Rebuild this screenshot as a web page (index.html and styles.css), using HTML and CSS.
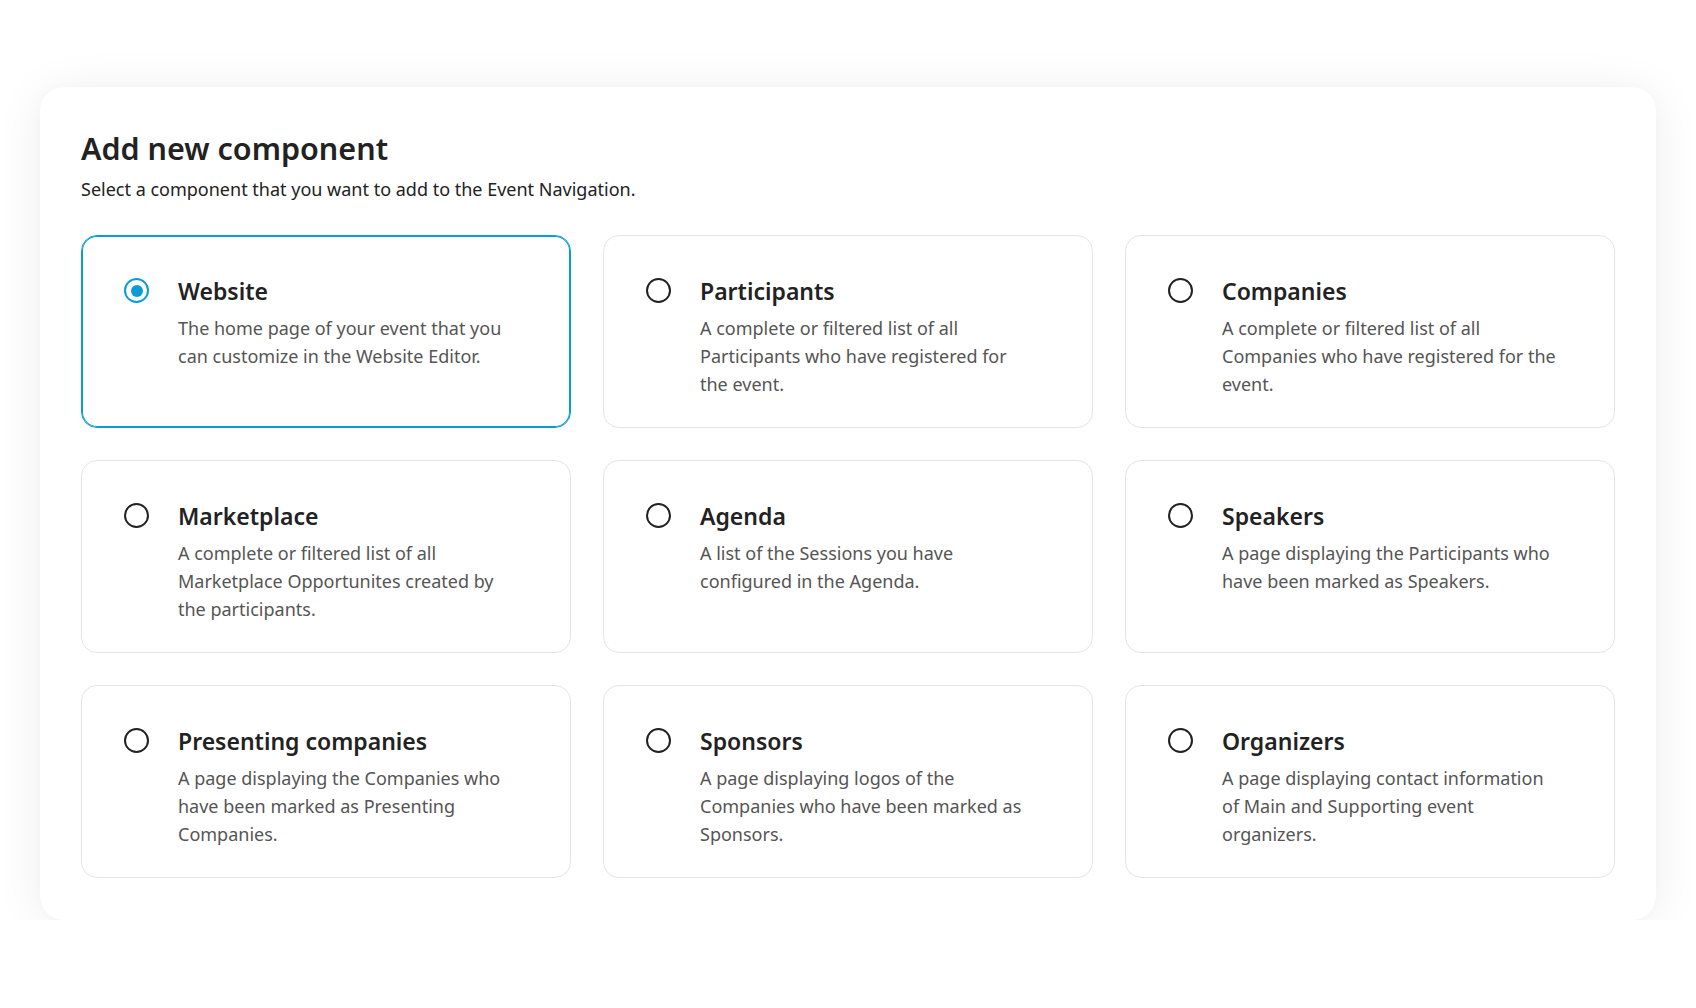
FILE: index.html
```html
<!DOCTYPE html>
<html lang="en">
<head>
<meta charset="utf-8">
<title>Add new component</title>
<link rel="stylesheet" href="styles.css">
</head>
<body>
<div class="panel">
  <h1 class="heading">Add new component</h1>
  <p class="subtitle">Select a component that you want to add to the Event Navigation.</p>
  <div class="grid">
    <div class="card selected">
      <span class="radio"></span>
      <div class="text">
        <div class="title">Website</div>
        <div class="desc">The home page of your event that you can customize in the Website Editor.</div>
      </div>
    </div>
    <div class="card">
      <span class="radio"></span>
      <div class="text">
        <div class="title">Participants</div>
        <div class="desc">A complete or filtered list of all Participants who have registered for the event.</div>
      </div>
    </div>
    <div class="card">
      <span class="radio"></span>
      <div class="text">
        <div class="title">Companies</div>
        <div class="desc">A complete or filtered list of all Companies who have registered for the event.</div>
      </div>
    </div>
    <div class="card">
      <span class="radio"></span>
      <div class="text">
        <div class="title">Marketplace</div>
        <div class="desc">A complete or filtered list of all Marketplace Opportunites created by the participants.</div>
      </div>
    </div>
    <div class="card">
      <span class="radio"></span>
      <div class="text">
        <div class="title">Agenda</div>
        <div class="desc">A list of the Sessions you have configured in the Agenda.</div>
      </div>
    </div>
    <div class="card">
      <span class="radio"></span>
      <div class="text">
        <div class="title">Speakers</div>
        <div class="desc">A page displaying the Participants who have been marked as Speakers.</div>
      </div>
    </div>
    <div class="card">
      <span class="radio"></span>
      <div class="text">
        <div class="title">Presenting companies</div>
        <div class="desc">A page displaying the Companies who have been marked as Presenting Companies.</div>
      </div>
    </div>
    <div class="card">
      <span class="radio"></span>
      <div class="text">
        <div class="title">Sponsors</div>
        <div class="desc">A page displaying logos of the Companies who have been marked as Sponsors.</div>
      </div>
    </div>
    <div class="card">
      <span class="radio"></span>
      <div class="text">
        <div class="title">Organizers</div>
        <div class="desc">A page displaying contact information of Main and Supporting event organizers.</div>
      </div>
    </div>
  </div>
</div>
</body>
</html>
```

FILE: styles.css
```css
* { box-sizing: border-box; }
html, body { margin: 0; padding: 0; background: #ffffff; }
body {
  font-family: "Noto Sans", "Open Sans", sans-serif;
  color: #222222;
  padding: 87px 40px 0 40px;
}
.panel {
  width: 1616px;
  background: #ffffff;
  border-radius: 24px;
  box-shadow: 0 4px 48px rgba(0, 0, 0, 0.07), 0 0 12px rgba(0, 0, 0, 0.02);
  padding: 41px 41px 42px 41px;
}
.heading {
  margin: 0;
  font-size: 30.5px;
  line-height: 40px;
  font-weight: 600;
  color: #222222;
}
.subtitle {
  margin: 7px 0 0 0;
  font-size: 18px;
  line-height: 28px;
  color: #222222;
}
.grid {
  margin-top: 32px;
  display: grid;
  grid-template-columns: repeat(3, 490px);
  column-gap: 32px;
  row-gap: 32px;
}
.card {
  display: flex;
  align-items: flex-start;
  border: 1px solid #e4e4e4;
  border-radius: 16px;
  padding: 39px 20px 28px 42px;
  min-height: 193px;
}
.card.selected {
  border-color: #0a9dd4;
  box-shadow: inset 0 0 0 1px #0a9dd4;
}
.radio {
  flex: none;
  width: 25px;
  height: 25px;
  margin-top: 3px;
  border: 2.3px solid #222222;
  border-radius: 50%;
  position: relative;
}
.card.selected .radio {
  border-color: #0a9dd4;
}
.card.selected .radio::after {
  content: "";
  position: absolute;
  left: 50%;
  top: 50%;
  width: 12px;
  height: 12px;
  margin: -6px 0 0 -6px;
  border-radius: 50%;
  background: #0a9dd4;
}
.text {
  margin-left: 29px;
}
.title {
  font-size: 23px;
  line-height: 32px;
  font-weight: 600;
  color: #222222;
}
.desc {
  margin-top: 7px;
  max-width: 336px;
  font-size: 18px;
  line-height: 28px;
  color: #555555;
}
```
